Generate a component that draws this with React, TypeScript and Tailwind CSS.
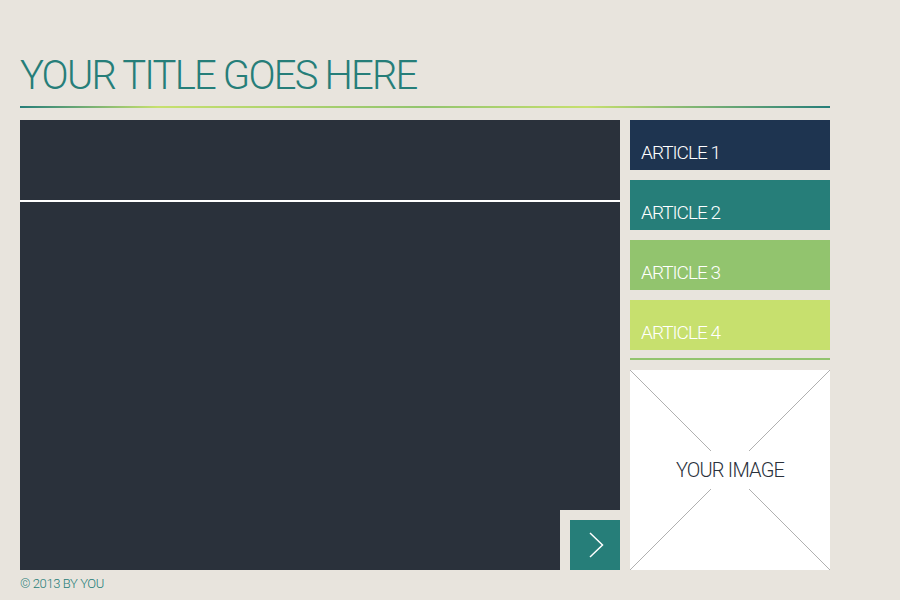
import React from 'react';

const articles = [
  { label: 'ARTICLE 1', bg: 'bg-[#1e3450]' },
  { label: 'ARTICLE 2', bg: 'bg-[#267e79]' },
  { label: 'ARTICLE 3', bg: 'bg-[#92c46e]' },
  { label: 'ARTICLE 4', bg: 'bg-[#c7e06e]' },
];

const App: React.FC = () => {
  return (
    <div className="w-[900px] h-[600px] bg-[#e8e4dd] font-['Roboto','Lato',sans-serif] overflow-hidden">
      <div className="pl-5 pt-[56px] w-[830px]">
        <h1 className="text-[40px] leading-[40px] font-light text-[#267e79] whitespace-nowrap tracking-[-1.8px]">
          YOUR TITLE GOES HERE
        </h1>

        {/* gradient rule under the title */}
        <div className="mt-[10px] h-[2px] w-[810px] bg-[linear-gradient(to_right,#267e79_0%,#c7e06e_17%,#92c46e_50%,#c7e06e_70%,#267e79_100%)]" />

        <div className="mt-3 flex gap-[10px]">
          {/* main panel */}
          <div className="w-[600px] h-[450px] flex flex-col">
            <div className="h-[80px] bg-[#2a313b]" />
            <div className="h-[2px] bg-white" />
            <div className="flex-1 bg-[#2a313b]" />
            <div className="h-[60px] flex">
              <div className="flex-1 bg-[#2a313b]" />
              <div className="w-[60px] pl-[10px] pt-[10px]">
                <button className="w-[50px] h-[50px] bg-[#267e79] flex items-center justify-center">
                  <svg width="50" height="50" viewBox="0 0 50 50">
                    <polyline points="20,13 32.5,25 20,37" fill="none" stroke="white" strokeWidth="1.5" />
                  </svg>
                </button>
              </div>
            </div>
          </div>

          {/* side column */}
          <div className="w-[200px] flex flex-col">
            {articles.map((a) => (
              <div key={a.label} className={`h-[50px] mb-[10px] ${a.bg} pl-[11px] pt-[21px]`}>
                <span className="text-[19px] leading-[24px] font-light text-white tracking-[-1px]">{a.label}</span>
              </div>
            ))}
            <div className="-mt-[2px] h-[2px] bg-[#92c46e]" />
            <div className="mt-[10px] h-[200px] bg-white relative flex items-center justify-center">
              <svg className="absolute inset-0" width="200" height="200" viewBox="0 0 200 200">
                <line x1="0" y1="0" x2="200" y2="200" stroke="#b0b0b0" strokeWidth="1" />
                <line x1="200" y1="0" x2="0" y2="200" stroke="#b0b0b0" strokeWidth="1" />
              </svg>
              <span className="relative bg-white px-1 py-[7px] text-[20px] leading-[24px] font-light text-[#2a313b] tracking-[-0.8px]">
                YOUR IMAGE
              </span>
            </div>
          </div>
        </div>

        <p className="mt-[6px] text-[13px] leading-[16px] font-light text-[#267e79] tracking-[-0.4px]">© 2013 BY YOU</p>
      </div>
    </div>
  );
};

export default App;
